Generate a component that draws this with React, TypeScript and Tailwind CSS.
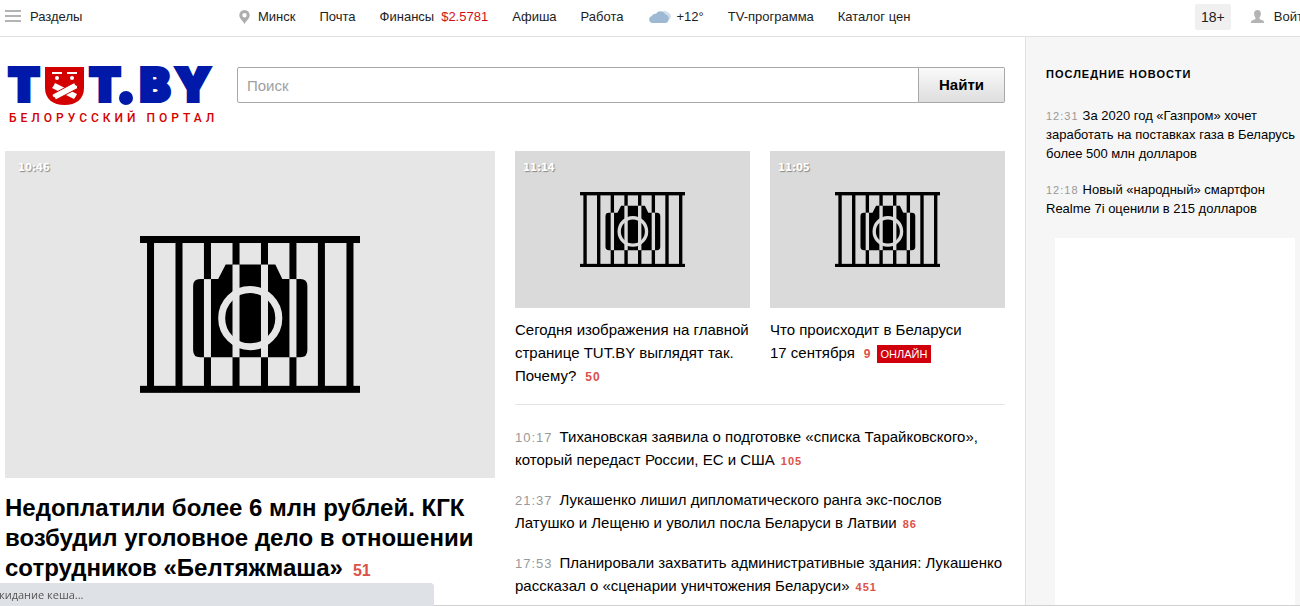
const topStories = [
  {
    time: '11:14',
    title: 'Сегодня изображения на главной странице TUT.BY выглядят так. Почему?',
    comments: 50,
    online: false,
  },
  {
    time: '11:05',
    title: 'Что происходит в Беларуси 17\u00a0сентября',
    comments: 9,
    online: true,
  },
];

const stories = [
  {
    time: '10:17',
    title: 'Тихановская заявила о подготовке «списка Тарайковского», который передаст России, ЕС и США',
    comments: 105,
  },
  {
    time: '21:37',
    title: 'Лукашенко лишил дипломатического ранга экс-послов Латушко и Лещеню и уволил посла Беларуси в Латвии',
    comments: 86,
  },
  {
    time: '17:53',
    title: 'Планировали захватить административные здания: Лукашенко рассказал о «сценарии уничтожения Беларуси»',
    comments: 451,
  },
];

const latestNews = [
  { time: '12:31', title: 'За 2020 год «Газпром» хочет заработать на поставках газа в Беларусь более 500 млн долларов' },
  { time: '12:18', title: 'Новый «народный» смартфон Realme 7i оценили в 215 долларов' },
];

const barOffsets = [7, 35.4, 63.8, 92.3, 120.7, 149.1, 177.5, 206];

// Camera behind bars; the light parts take the text colour of the parent
function CagedCamera() {
  return (
    <svg viewBox="0 0 220 157" className="w-[45%]" aria-hidden="true">
      <g fill="#000">
        <rect width="220" height="7" />
        <rect y="149.5" width="220" height="7" />
        {barOffsets.map((x) => (
          <rect key={x} x={x} y="5" width="7" height="147" />
        ))}
        <path d="M60 43H78L85.500 28.500H135L142 43H160Q167 43 167 50V114Q167 121 160 121H60Q53 121 53 114V50Q53 43 60 43Z" />
      </g>
      <g fill="currentColor">
        <rect x="63.800" y="43" width="7" height="78" />
        <rect x="92.300" y="28.500" width="7" height="92.500" />
        <rect x="120.700" y="28.500" width="7" height="92.500" />
        <rect x="149.100" y="43" width="7" height="78" />
      </g>
      <circle cx="110" cy="82" r="28.500" fill="none" stroke="currentColor" strokeWidth="7" />
    </svg>
  );
}

function Logo() {
  return (
    <a href="#" aria-label="TUT.BY" className="block w-[232px] shrink-0">
      <svg viewBox="0 0 232 40" className="block w-full" aria-hidden="true">
        <g
          fill="#0019a8"
          stroke="#0019a8"
          strokeWidth="4"
          className="font-['Inter'] text-[45px] font-black"
        >
          <text x="19" y="35" textAnchor="middle">T</text>
          <text x="100" y="35" textAnchor="middle">T</text>
          <text x="150" y="35" textAnchor="middle">B</text>
          <text x="188" y="35" textAnchor="middle">Y</text>
          <circle cx="121" cy="32" r="5" />
        </g>
        <path fill="#d40000" d="M40 1H79V22C79 33 71 39 59.500 39S40 33 40 22Z" />
        <g fill="#fff">
          <rect x="47" y="6" width="10" height="2" />
          <rect x="62" y="6" width="10" height="2" />
          <circle cx="52" cy="12" r="2" />
          <circle cx="67" cy="12" r="2" />
          <path d="M50 17L72 28L71 30L69 33L47 22L48.500 20Z" />
          <path stroke="#d40000" d="M47 28.500L69.500 16.500L70.500 19L72.500 19.500V22.500L50.500 34L49.500 31.500L47.500 31Z" />
        </g>
      </svg>
      <span className="mt-1 ml-1 block font-['Roboto'] text-xs leading-4 font-medium tracking-[4px] whitespace-nowrap text-[#d40000]">
        БЕЛОРУССКИЙ ПОРТАЛ
      </span>
    </a>
  );
}

function TimeBadge({ time }: { time: string }) {
  return (
    <time className="font-['DejaVu_Sans'] text-[10px] leading-[18px] font-bold text-white [text-shadow:1px_1px_1px_#888]">
      {time}
    </time>
  );
}

function Header() {
  return (
    <header className="flex h-[37px] items-center overflow-hidden border-b border-[#e0e0e0] pb-[3px] pl-[5px] text-[13px] whitespace-nowrap text-[#222]">
      <button className="flex w-[234px] shrink-0 items-center gap-[9px]">
        <svg width="16" height="14" viewBox="0 0 16 14" fill="#b4b4b4" aria-hidden="true">
          <rect width="16" height="2" />
          <rect y="5" width="16" height="2" />
          <rect y="10" width="16" height="2" />
        </svg>
        Разделы
      </button>
      <nav className="flex items-center gap-6">
        <a href="#" className="flex items-center gap-2">
          <svg width="11" height="14" viewBox="0 0 11 14" fill="#adadad" aria-hidden="true">
            <path fillRule="evenodd" d="M5.500 0A5.200 5.200 0 0 0 .3 5.200C.3 8.500 4 11 5.500 14C7 11 10.700 8.500 10.700 5.200A5.200 5.200 0 0 0 5.500 0ZM5.500 3A2.200 2.200 0 1 1 5.500 7.400A2.200 2.200 0 0 1 5.500 3Z" />
          </svg>
          Минск
        </a>
        <a href="#">Почта</a>
        <a href="#" className="flex gap-[7px]">
          Финансы <span className="text-[#d40f14]">$2.5781</span>
        </a>
        <a href="#">Афиша</a>
        <a href="#">Работа</a>
        <a href="#" className="flex items-center gap-[5px]">
          <svg width="24" height="14" viewBox="0 0 24 14" aria-hidden="true">
            <path fill="#d3e0eb" d="M13 3A4.500 4.500 0 0 1 20 2.500A4 4 0 0 1 21.500 9.500L18 11Z" />
            <path fill="#9db9d3" d="M4.500 13A3.500 3.500 0 0 1 3.500 6.200A4.200 4.200 0 0 1 8 3.700A5.500 5.500 0 0 1 17.500 4.500A4.400 4.400 0 0 1 17.500 13Z" />
          </svg>
          +12°
        </a>
        <a href="#">TV-программа</a>
        <a href="#">Каталог цен</a>
      </nav>
      <div className="ml-auto flex w-[105px] shrink-0 items-center">
        <span className="mr-5 rounded-xs bg-[#f0f0f0] px-[6px] text-sm leading-[26px]">18+</span>
        <a href="#" className="flex items-center gap-[10px]">
          <svg width="13" height="14" viewBox="0 0 13 14" fill="#b4b4b4" aria-hidden="true">
            <path d="M6.500 0C8.900 0 9.900 1.500 9.900 3.500C9.900 5.500 9.100 6.800 8.500 7.700V9L12 10.500C12.800 10.900 13 11.500 13 13H0C0 11.500.2 10.900 1 10.500L4.500 9V7.700C3.900 6.800 3.100 5.500 3.100 3.500C3.100 1.500 4.100 0 6.500 0Z" />
          </svg>
          Войти
        </a>
      </div>
    </header>
  );
}

export default function App() {
  return (
    <div className="flex min-h-screen flex-col border-b border-[#d0d0d0] bg-white font-['Liberation_Sans',sans-serif] text-black">
      <Header />
      <div className="flex grow">
        <main className="min-w-0 grow pr-5 pl-[5px]">
          <div className="flex pt-[29px]">
            <Logo />
            <form className="mt-px flex h-9 grow" onSubmit={(e) => e.preventDefault()}>
              <input
                type="search"
                aria-label="Поиск"
                placeholder="Поиск"
                className="min-w-0 grow rounded-l-xs border border-[#a8a8a8] px-[9px] pt-0.5 text-[15px] placeholder:text-[#a0a0a0]"
              />
              <button className="w-[86px] rounded-r-xs border border-l-0 border-[#a8a8a8] bg-linear-to-b from-[#fafafa] to-[#dedede] text-[15px] font-bold">
                Найти
              </button>
            </form>
          </div>

          <div className="mt-[25px] grid grid-cols-2 gap-5">
            <article>
              <div className="relative flex aspect-[3/2] items-center justify-center bg-[#e6e6e6] text-[#e6e6e6]">
                <CagedCamera />
                <div className="absolute top-2 left-[13px] flex">
                  <TimeBadge time="10:46" />
                </div>
              </div>
              <h1 className="mt-[15px] text-2xl leading-[30px] font-bold">
                <a href="#">Недоплатили более 6 млн рублей. КГК возбудил уголовное дело в отношении сотрудников «Белтяжмаша»</a>
                <span className="ml-[10px] text-base leading-none text-[#dc5148]">51</span>
              </h1>
            </article>

            <div>
              <div className="grid grid-cols-2 gap-5 border-b border-[#e4e4e4] pb-[17px]">
                {topStories.map((story) => (
                  <article key={story.time}>
                    <div className="relative flex aspect-[3/2] items-center justify-center bg-[#dadada] text-[#dadada]">
                      <CagedCamera />
                      <div className="absolute top-2 left-2 flex">
                        <TimeBadge time={story.time} />
                      </div>
                    </div>
                    <h2 className="mt-[10px] text-[15px] leading-[23px]">
                      <a href="#">{story.title}</a>
                      <span className="ml-[9px] text-xs leading-none font-bold tracking-[1px] text-[#dc5148]">
                        {story.comments}
                      </span>
                      {story.online && (
                        <span className="ml-[5px] inline-block bg-[#d0000c] px-1 align-middle text-[11px] leading-[18px] text-white">
                          ОНЛАЙН
                        </span>
                      )}
                    </h2>
                  </article>
                ))}
              </div>

              <ul className="mt-5 space-y-[17px] text-[15px] leading-[23px]">
                {stories.map((story) => (
                  <li key={story.time}>
                    <time className="mr-[7px] text-[13px] leading-none tracking-[1px] text-[#999]">{story.time}</time>
                    <a href="#">{story.title}</a>
                    <span className="ml-[6px] text-[11px] leading-none font-bold tracking-[1px] text-[#dc5148]">
                      {story.comments}
                    </span>
                  </li>
                ))}
              </ul>
            </div>
          </div>
        </main>

        <aside className="flex w-[275px] shrink-0 flex-col border-l border-[#e0e0e0] bg-[#f6f6f6] pt-7 pl-5">
          <h2 className="text-[11px] leading-[19px] font-bold tracking-[1px]">ПОСЛЕДНИЕ НОВОСТИ</h2>
          <ul className="mt-[22px] space-y-[17px] text-[13px] leading-[19px]">
            {latestNews.map((item) => (
              <li key={item.time}>
                <time className="mr-1 text-[11px] leading-none tracking-[1px] text-[#999]">{item.time}</time>
                <a href="#">{item.title}</a>
              </li>
            ))}
          </ul>
          <div className="mt-5 mr-[5px] ml-[9px] grow bg-white" />
        </aside>
      </div>

      {/* Loading status */}
      <div className="fixed bottom-0 left-0 h-[23px] w-[434px] overflow-hidden rounded-tr bg-[#dee1e6]">
        <p className="-ml-3 font-['Open_Sans'] text-[11px] leading-[23px] text-[#555]">Ожидание кеша...</p>
      </div>
    </div>
  );
}
